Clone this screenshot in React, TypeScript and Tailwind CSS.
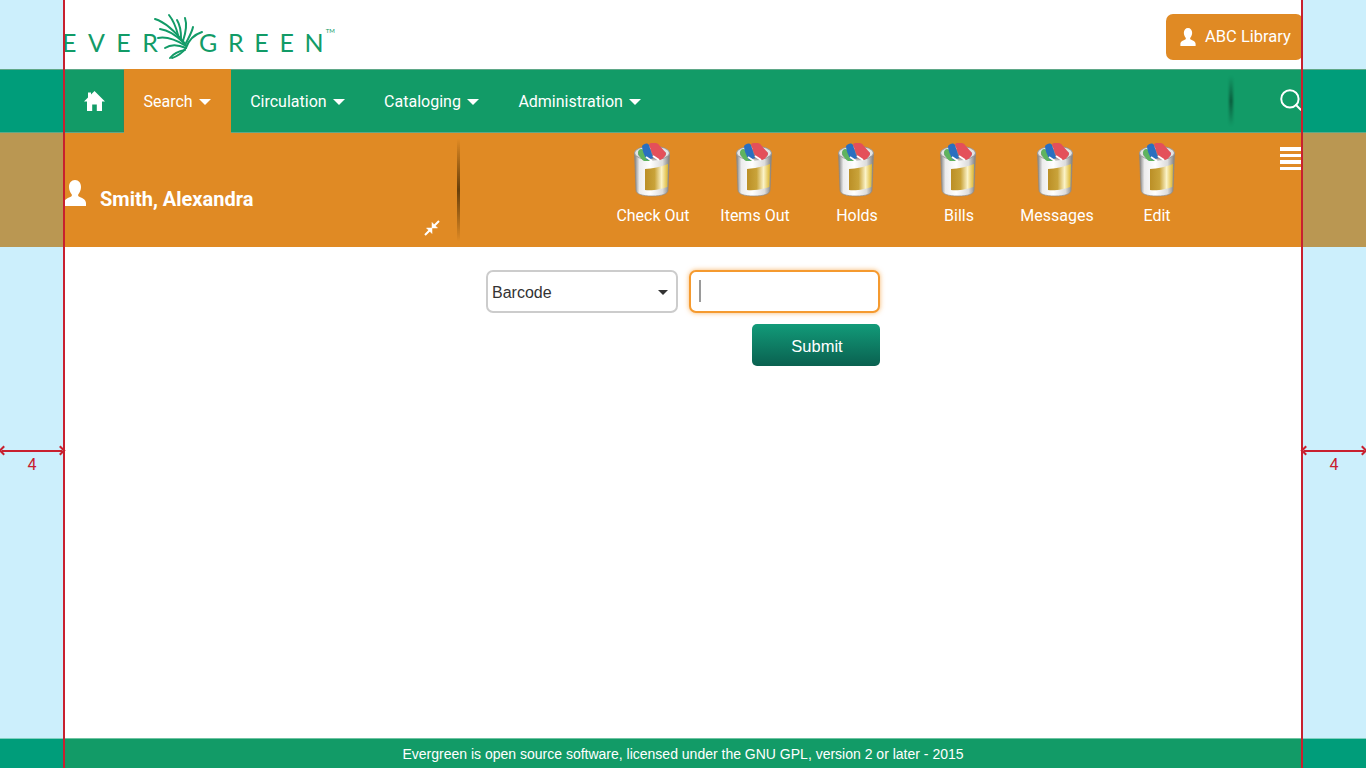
import { Search } from 'lucide-react'

const NAV_ITEMS = [
  { label: 'Search', active: true },
  { label: 'Circulation', active: false },
  { label: 'Cataloging', active: false },
  { label: 'Administration', active: false },
]

const ACTIONS = [
  { label: 'Check Out', width: 'w-[102px]', shift: 'mr-[3px]' },
  { label: 'Items Out', width: 'w-[102px]', shift: 'mr-[2px]' },
  { label: 'Holds', width: 'w-[102px]', shift: 'mr-[3px]' },
  { label: 'Bills', width: 'w-[102px]', shift: 'mr-[3px]' },
  { label: 'Messages', width: 'w-[94px]', shift: 'mr-[5px]' },
  { label: 'Edit', width: 'w-[106px]', shift: 'mr-[1px]' },
]

function Caret() {
  return <span className="h-0 w-0 border-x-[6px] border-t-[6px] border-x-transparent border-t-white" />
}

function Person({ className }: { className: string }) {
  return (
    <svg viewBox="0 0 22 26" className={className} fill="currentColor">
      <path d="M11 0c3.700 0 6 3 6 7 0 3-1.200 5.500-2.600 7.200-.5.700-.4 1.800.4 2.300 2.400 1.300 7.200 2.500 7.200 6.500v3H0v-3c0-4 4.800-5.200 7.200-6.500.8-.5.9-1.600.4-2.300C6.200 12.500 5 10 5 7c0-4 2.300-7 6-7z" />
    </svg>
  )
}

function HomeIcon() {
  return (
    <svg viewBox="0 0 21 20" className="ml-[1px] h-[20px] w-[21px]" fill="white">
      <path d="M10.500 0L21 10.500H18V20H12.800V13.500H8.200V20H3V10.500H0L4 6.500V1.500H7V3.500Z" />
    </svg>
  )
}

function Palm() {
  const fronds = [
    'M5 9C15 12 25 21 36 35',
    'M19 5C23 10 26 17 28 25',
    'M27 10C30 15 31 21 31 28',
    'M35 8C37 14 36 22 33 31',
    'M43 17C42 22 39 27 36 33',
    'M10 19C18 20 27 26 34 33',
    'M8 28C18 26 28 31 36 36',
    'M15 38C21 34 29 35 36 38',
    'M20 48C24 43 29 41 35 40',
    'M52 22C43 25 38 32 36 38 33 42 28 46 22 48',
  ]
  return (
    <svg viewBox="0 0 60 54" className="h-[54px] w-[60px] shrink-0" fill="none" stroke="#129b67" strokeWidth="2" strokeLinecap="round">
      {fronds.map((d) => (
        <path key={d} d={d} />
      ))}
    </svg>
  )
}

function Can({ id, shift }: { id: string; shift: string }) {
  return (
    <svg viewBox="0 0 36 54" className={`h-[54px] w-[36px] ${shift}`}>
      <defs>
        <linearGradient id={`body-${id}`} x1="0" x2="1" y1="0" y2="0">
          <stop offset="0" stopColor="#7d7d7d" />
          <stop offset="0.14" stopColor="#ececec" />
          <stop offset="0.45" stopColor="#ffffff" />
          <stop offset="0.8" stopColor="#dcdcdc" />
          <stop offset="1" stopColor="#7f7f7f" />
        </linearGradient>
        <linearGradient id={`label-${id}`} x1="0" x2="1" y1="0" y2="0">
          <stop offset="0" stopColor="#bb8f26" />
          <stop offset="0.42" stopColor="#c9a33a" />
          <stop offset="0.72" stopColor="#fbf3c8" />
          <stop offset="1" stopColor="#dcb52c" />
        </linearGradient>
      </defs>
      <path d="M0.500 10L2 47C2 51 8 53 18 53S34 51 34 47L35.500 10Z" fill={`url(#body-${id})`} stroke="#8a8a8a" strokeWidth="0.700" />
      <ellipse cx="18" cy="10" rx="17.500" ry="7" fill="#e4e4e4" stroke="#8a8a8a" strokeWidth="0.800" />
      <ellipse cx="18" cy="11" rx="14" ry="5" fill="#8f8f8f" />
      <path d="M4 9C5 5 9 5 11 9L16 18 10 18C7 16 4 12 4 9Z" fill="#5fb35f" />
      <path d="M8 3C10 0 14-.5 15 2L19 15 13 17C10 12 8 7 8 3Z" fill="#2a6fc0" />
      <path d="M15 1C17-1 24-.5 25 2L32 10C32 13 29 16 26 17L20 15C18 10 16 5 15 1Z" fill="#e4505a" />
      <path d="M12 14L18 18M19 13L25 17" stroke="#ffffff" strokeWidth="1.800" />
      <path d="M11 26C18 25.500 27 24 34 21L33.300 44C28 46 18 48 11 47Z" fill={`url(#label-${id})`} />
    </svg>
  )
}

function Gap({ side }: { side: 'left' | 'right' }) {
  // measuring overlay that sits over the page at both sides
  return (
    <div className={`absolute inset-y-0 flex w-[64px] flex-col ${side === 'left' ? 'left-0' : 'right-0'}`}>
      <div className="h-[69px] bg-[#cceffc]" />
      <div className="h-[64px] border-y border-[#5fa888] bg-[#009d7a]" />
      <div className="h-[114px] bg-[#ba9752]" />
      <div className="flex-1 bg-[#cceffc]" />
      <div className="h-[30px] border-t border-[#7fd0c0] bg-[#009d7a]" />
      <div className="absolute top-[449.500px] left-[2px] right-[2px] h-[2px] bg-[#c8202f]" />
      <span className="absolute top-[447px] left-0 h-[7px] w-[7px] rotate-45 border-b-2 border-l-2 border-[#c8202f]" />
      <span className="absolute top-[447px] right-0 h-[7px] w-[7px] rotate-45 border-t-2 border-r-2 border-[#c8202f]" />
      <span className="absolute top-[456px] inset-x-0 text-center font-['Roboto',sans-serif] text-base leading-[18px] text-[#c8202f]">4</span>
    </div>
  )
}

export default function App() {
  return (
    <div className="relative flex h-screen flex-col overflow-hidden bg-white font-['Roboto',sans-serif]">
      <header className="flex h-[69px] shrink-0 items-start justify-between pl-[62px] pr-[63px]">
        <div className="mt-[10px] flex h-[54px] items-center font-['Lato',sans-serif] text-[25px] leading-none text-[#129b67]">
          <span className="flex w-[88px] pt-[10px]">
            <span className="tracking-[11.500px]">EVE</span>
            <span>R</span>
          </span>
          <Palm />
          <span className="-ml-[11px] flex pt-[10px]">
            <span className="tracking-[10.700px]">GREE</span>
            <span>N</span>
          </span>
          <span className="mb-[12px] ml-[2px] text-[6px] leading-none">TM</span>
        </div>
        <div className="mt-[14px] flex h-[46px] w-[137px] items-center gap-[9px] rounded-[7px] bg-[#e08a24] pl-[14px] text-[16.500px] text-white">
          <Person className="h-[18px] w-[16px]" />
          <span>ABC Library</span>
        </div>
      </header>

      <nav className="flex h-[64px] shrink-0 items-stretch border-y border-[#5fa888] bg-[#129b67] pl-[64px] pr-[64px] text-base text-white">
        <div className="flex w-[60px] items-center justify-center border-r border-b border-[#2a8a60]">
          <HomeIcon />
        </div>
        {NAV_ITEMS.map((item) => (
          <div
            key={item.label}
            className={`-mt-px -mb-px flex items-center gap-[6.500px] px-[19.500px] pt-[1px] ${item.active ? 'bg-[#e08a24]' : ''}`}
          >
            <span>{item.label}</span>
            <Caret />
          </div>
        ))}
        <div className="ml-auto my-[6px] mr-[47px] w-[4px] bg-[linear-gradient(to_bottom,transparent,rgba(0,0,0,0.4)_50%,transparent)] blur-[1px]" />
        <div className="flex w-[22px] items-center overflow-hidden pb-[3px]">
          <Search size={26} strokeWidth={1.800} className="-ml-[2px] shrink-0" />
        </div>
      </nav>

      <section className="flex h-[114px] shrink-0 bg-[#e08a24] pl-[64px] pr-[64px] text-white">
        <div className="relative flex w-[393px] shrink-0 items-center pt-[18px]">
          <Person className="mb-[12px] h-[26px] w-[22px]" />
          <span className="ml-[14px] text-[20px] font-bold">Smith, Alexandra</span>
          <svg viewBox="0 0 16 16" className="absolute bottom-[11px] right-[17px] h-[16px] w-[16px]" stroke="white" fill="white" strokeWidth="2">
            <path d="M1 15L6 10M15 1L10 6" fill="none" />
            <path d="M2.500 8H8V13.500ZM13.500 8H8V2.500Z" strokeWidth="0.500" />
          </svg>
        </div>
        <div className="my-[6px] w-[3px] shrink-0 bg-[linear-gradient(to_bottom,transparent,rgba(50,30,0,0.7)_50%,transparent)] blur-[0.5px]" />
        <div className="ml-[142px] flex">
          {ACTIONS.map((action) => (
            <div key={action.label} className={`flex flex-col items-center pt-[10px] ${action.width}`}>
              <Can id={action.label.replace(' ', '')} shift={action.shift} />
              <span className="mt-[7px] text-base leading-[24px]">{action.label}</span>
            </div>
          ))}
        </div>
        <div className="ml-auto mt-[14px] flex w-[22px] flex-col gap-[3px]">
          <span className="h-[3.500px] bg-white" />
          <span className="h-[3.500px] bg-white" />
          <span className="h-[3.500px] bg-white" />
          <span className="h-[3.500px] bg-white" />
        </div>
      </section>

      <main className="flex-1 pl-[486px] pt-[23px] font-['Liberation_Sans',sans-serif]">
        <div className="flex w-[394px] flex-col items-end gap-[11px]">
          <div className="flex w-full gap-[11px]">
            <div className="relative h-[43px] w-[192px]">
              <select className="h-full w-full appearance-none rounded-[7px] border-2 border-[#cccccc] bg-white pt-[2px] pl-[4px] text-base text-[#333333]">
                <option>Barcode</option>
              </select>
              <span className="pointer-events-none absolute top-[20px] right-[10px] h-0 w-0 border-x-[5px] border-t-[5px] border-x-transparent border-t-[#333333]" />
            </div>
            <div className="flex h-[43px] w-[191px] items-center rounded-[7px] border-2 border-[#f59a2f] bg-white pl-[8px] shadow-[0_0_5px_rgba(245,154,47,0.7)]">
              <span className="mb-[2px] h-[22px] w-[2px] bg-[#9a9a9a]" />
            </div>
          </div>
          <button className="h-[42px] w-[128px] rounded-[5px] bg-gradient-to-b from-[#129b79] to-[#0a6150] pt-[2px] pl-[2px] text-[16.500px] text-white">
            Submit
          </button>
        </div>
      </main>

      <footer className="flex h-[30px] shrink-0 items-center justify-center border-t border-[#6fc4a2] bg-[#129b67] pt-[1px] font-['Liberation_Sans',sans-serif] text-sm text-white">
        Evergreen is open source software, licensed under the GNU GPL, version 2 or later - 2015
      </footer>

      <Gap side="left" />
      <Gap side="right" />
      <div className="absolute inset-y-0 left-[63px] w-[2px] bg-[#c8202f]" />
      <div className="absolute inset-y-0 left-[1301px] w-[2px] bg-[#c8202f]" />
    </div>
  )
}
